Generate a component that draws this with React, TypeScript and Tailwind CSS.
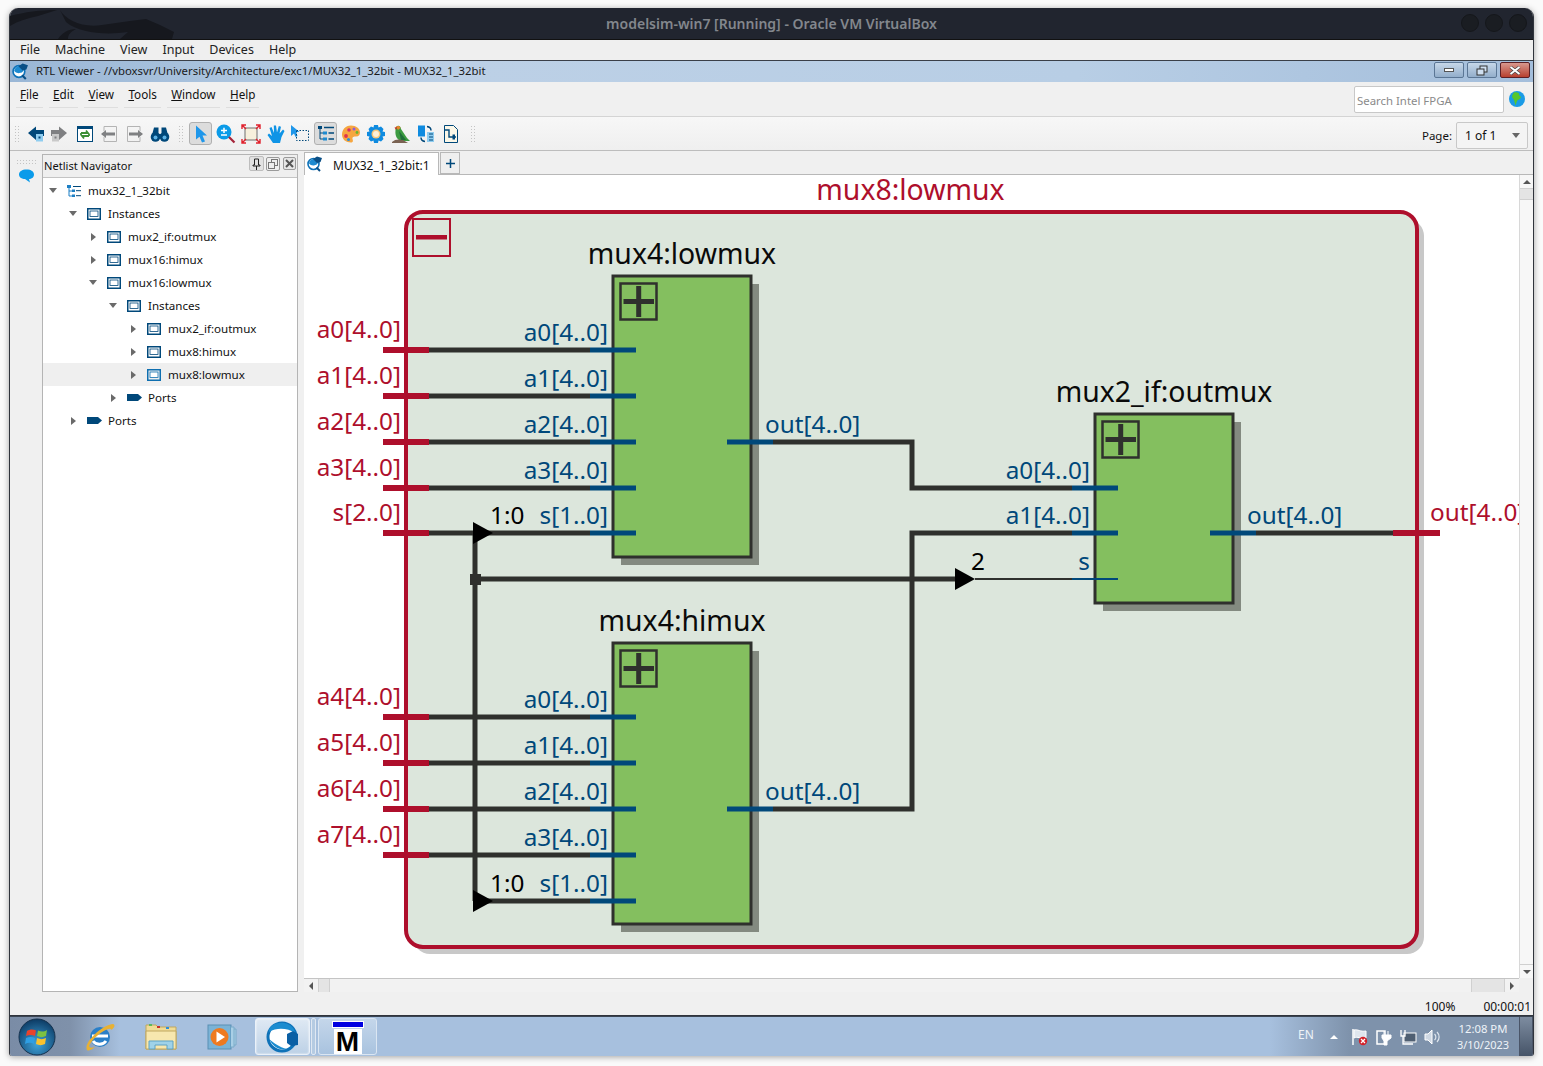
import React from "react";

const F = "font-['Noto_Sans',sans-serif]";

const RED = "#ae0f2c";
const BLUE = "#00487a";
const WIRE = "#2f302d";

function Grip({ className = "" }: { className?: string }) {
  return (
    <div className={"grid grid-cols-2 gap-x-[2px] gap-y-[2px] w-[3px] " + className}>
      {Array.from({ length: 12 }).map((_, i) => (
        <span key={i} className="w-[1px] h-[1px] bg-[#c4c4c4]" />
      ))}
    </div>
  );
}

function ChipIcon({ size = 16 }: { size?: number }) {
  return (
    <svg width={size} height={size} viewBox="0 0 16 16">
      <circle cx="6.5" cy="8" r="5.5" fill="#fff" stroke="#0f72b8" strokeWidth="1.6" />
      <path d="M2 7.5 A5 5 0 0 1 8 3 L11 7 A5 4 0 0 1 2 7.5Z" fill="#1d8ad0" />
      <path d="M6 3 L10 0.5 L15 2 L13.5 6 L10 7Z" fill="#0a4f86" />
      <path d="M9.5 11.5 L13 15" stroke="#0a4f86" strokeWidth="2" />
    </svg>
  );
}

const Ic = ({ children, w = 20, h = 20 }: { children: React.ReactNode; w?: number; h?: number }) => (
  <svg width={w} height={h} viewBox="0 0 20 20">{children}</svg>
);

const icons: Record<string, React.ReactNode> = {
  back: (
    <Ic>
      <path d="M1 9 L9 2.500 V6 H17 V12 H9 V16Z" fill="#00487a" />
      <rect x="9" y="10" width="7" height="7.500" fill="#8fcdf0" />
      <rect x="11.500" y="12.500" width="2" height="2" fill="#00487a" />
    </Ic>
  ),
  fwd: (
    <Ic>
      <path d="M19 9 L11 2.500 V6 H3 V12 H11 V16Z" fill="#7f8082" />
      <rect x="4" y="10" width="7" height="7.500" fill="#c9c9c9" />
      <rect x="6.500" y="12.500" width="2" height="2" fill="#7f8082" />
    </Ic>
  ),
  refresh: (
    <Ic>
      <rect x="2.500" y="2.500" width="15" height="15" fill="#fff" stroke="#00487a" />
      <rect x="2" y="2" width="16" height="3" fill="#00487a" />
      <path d="M6 9 H13 L11 6.500 M14 12 H7 L9 14.500 M6 9 V11 M14 10 V12" fill="none" stroke="#3c8f35" strokeWidth="1.800" />
    </Ic>
  ),
  prev: (
    <Ic>
      <path d="M4 7 V2.500 H16.500 V17.500 H4 V13" fill="none" stroke="#b4b4b4" />
      <path d="M1 10 L6 6 V8.500 H15 V11.500 H6 V14Z" fill="#7f8082" />
    </Ic>
  ),
  next: (
    <Ic>
      <path d="M16 7 V2.500 H3.500 V17.500 H16 V13" fill="none" stroke="#b4b4b4" />
      <path d="M19 10 L14 6 V8.500 H5 V11.500 H14 V14Z" fill="#7f8082" />
    </Ic>
  ),
  binoc: (
    <Ic>
      <circle cx="5.500" cy="13" r="4.800" fill="#00487a" />
      <circle cx="14.500" cy="13" r="4.800" fill="#00487a" />
      <path d="M2 11 L4 3.500 H8.500 V10 H11.500 V3.500 H16 L18 11Z" fill="#00487a" />
      <circle cx="5.500" cy="13.500" r="2" fill="#5eb3e6" />
      <circle cx="14.500" cy="13.500" r="2" fill="#5eb3e6" />
    </Ic>
  ),
  pointer: (
    <Ic>
      <path d="M5 1.500 L16 11.500 H11.500 L14 17.500 L11 18.500 L8.500 12.800 L5 15.500Z" fill="#1f97ea" />
    </Ic>
  ),
  zoom: (
    <Ic>
      <circle cx="8" cy="8" r="7.500" fill="#0b9be8" />
      <path d="M5 6.500 H11 M8 3.800 V9 M5 11 H11" stroke="#fff" strokeWidth="1.500" />
      <path d="M13 13 L18.500 18.500" stroke="#a5243a" strokeWidth="2.200" />
    </Ic>
  ),
  fit: (
    <Ic>
      <rect x="4" y="4" width="12" height="12" fill="#f7f0dc" stroke="#6f6f6f" />
      <path d="M1 5 V1 H5 M15 1 H19 V5 M19 15 V19 H15 M5 19 H1 V15 M1 1 L5 5 M19 1 L15 5 M19 19 L15 15 M1 19 L5 15" fill="none" stroke="#e0202c" strokeWidth="1.400" />
    </Ic>
  ),
  hand: (
    <Ic>
      <path d="M7 19 L1.500 11 L3 9.500 L6 12 L3.500 4 L5.500 3 L8 9 L7.800 1.500 H10 L11 8.500 L12.800 2 L15 2.800 L13.500 9.500 L17 5.500 L18.500 7 L15.500 13 L14 19Z" fill="#0f94e6" />
    </Ic>
  ),
  select: (
    <Ic>
      <path d="M1 1 L9.500 8 H6 L7.500 12 L5.500 13 L4 9.500 L1 12Z" fill="#1f97ea" />
      <rect x="6.500" y="6.500" width="12" height="10" fill="none" stroke="#00487a" strokeDasharray="1.500 1.500" />
    </Ic>
  ),
  hier: (
    <Ic>
      <path d="M4 3 V15 H8 M4 9 H8" fill="none" stroke="#00487a" />
      <rect x="2" y="2" width="4" height="3" fill="#00487a" />
      <rect x="7" y="7.500" width="4" height="3" fill="#1d8ad0" />
      <rect x="7" y="13.500" width="4" height="3" fill="#1d8ad0" />
      <path d="M8 3.500 H18 M12.500 9 H18 M12.500 15 H18" stroke="#00487a" strokeWidth="1.400" />
    </Ic>
  ),
  palette: (
    <Ic>
      <path d="M10 1.500 C4 1.500 1 6 1 10.500 C1 15.500 5 18.500 10 18.500 C12.500 18.500 12 16 11.500 15 C11 13 13 12.500 15 12.500 C18 12.500 19 10.500 19 8.500 C19 4.500 15 1.500 10 1.500Z" fill="#f6a640" />
      <circle cx="5" cy="12" r="1.900" fill="#e0334c" />
      <circle cx="7.500" cy="15.500" r="1.500" fill="#2b8fdc" />
      <circle cx="8" cy="6" r="1.800" fill="#d6306a" />
      <circle cx="13" cy="5" r="1.500" fill="#8f5ad6" />
      <circle cx="16" cy="8.500" r="1.400" fill="#68b532" />
    </Ic>
  ),
  gear: (
    <Ic>
      <path d="M8 1 H12 L12.500 3.500 L15 2.500 L17.500 5 L16.500 7.500 L19 8 V12 L16.500 12.500 L17.500 15 L15 17.500 L12.500 16.500 L12 19 H8 L7.500 16.500 L5 17.500 L2.500 15 L3.500 12.500 L1 12 V8 L3.500 7.500 L2.500 5 L5 2.500 L7.500 3.500Z" fill="#0f8be0" />
      <circle cx="10" cy="10" r="4.500" fill="#f5c77c" />
      <circle cx="10" cy="10" r="3" fill="#fbf0d8" />
    </Ic>
  ),
  bird: (
    <Ic>
      <path d="M5 3 C7 0.500 10 2 10 5 L16 14 L19 17 H11 C6 16 3 12 5 3Z" fill="#3c9b41" />
      <path d="M5 3 C6 1.500 9 1.500 9.500 4 L7 6Z" fill="#e9862c" />
      <path d="M3.500 3.500 L6 3 L5 6Z" fill="#c9332b" />
      <path d="M8 7 L15 16 H10Z" fill="#1f6f3a" />
      <path d="M1 18 C4 15 8 15 12 16 L17 19 H1Z" fill="#7a6252" />
    </Ic>
  ),
  swap: (
    <Ic>
      <rect x="2" y="1.500" width="7" height="11" fill="#0f8be0" />
      <rect x="11" y="8" width="7" height="10" fill="#8fcdf0" />
      <path d="M11 2.500 C14 3 15 5 15 6.500 M9 17.500 C6 17 5 15 5 13.500" fill="none" stroke="#00487a" strokeWidth="1.500" />
      <path d="M13 10 H17 M13 13 H17 M13 16 H17" stroke="#00487a" />
    </Ic>
  ),
  rtl: (
    <Ic>
      <path d="M3.500 1.500 H12.500 L16.500 5.500 V18.500 H3.500Z" fill="#fbf7e8" stroke="#00487a" />
      <path d="M3.500 6 H8 L8 13 H15" fill="none" stroke="#00487a" strokeWidth="1.400" />
      <rect x="11.500" y="10.500" width="2.500" height="5" fill="#00487a" />
    </Ic>
  ),
};

function ToolBtn({ name, active, ml = 0 }: { name: string; active?: boolean; ml?: number }) {
  return (
    <div
      className={
        "w-[23px] h-[23px] flex items-center justify-center rounded-[3px] shrink-0 " +
        (active ? "bg-[#dcdcdc] border border-[#b0b0b0]" : "")
      }
      style={{ marginLeft: ml }}
    >
      {icons[name]}
    </div>
  );
}

function InstIcon({ light }: { light?: boolean }) {
  return (
    <svg width="14" height="12" viewBox="0 0 14 12">
      <rect x="0.750" y="0.750" width="12.500" height="10.500" fill="none" stroke={light ? "#0f6fb0" : "#00487a"} strokeWidth="1.500" />
      <rect x="3" y="3" width="8" height="5.500" fill="#fff" stroke={light ? "#0f6fb0" : "#00487a"} strokeWidth="0.800" />
    </svg>
  );
}

function PortIcon() {
  return (
    <svg width="15" height="7" viewBox="0 0 15 7">
      <path d="M0 0 H11 L15 3.500 L11 7 H0Z" fill="#00487a" />
    </svg>
  );
}

function TopIcon() {
  return (
    <svg width="14" height="12" viewBox="0 0 14 12">
      <path d="M2 0 V11 H6 M2 6 H6" stroke="#1d7fc4" fill="none" />
      <rect x="0" y="0" width="4" height="3" fill="#1d7fc4" />
      <rect x="5" y="4.500" width="3" height="2.500" fill="#1d7fc4" />
      <rect x="5" y="9.500" width="3" height="2.500" fill="#1d7fc4" />
      <path d="M6 1.500 H14 M9 5.700 H14 M9 10.700 H14" stroke="#00487a" />
    </svg>
  );
}

type Row = { label: string; level: number; open?: boolean; leaf?: boolean; kind: "top" | "inst" | "port"; sel?: boolean };
const rows: Row[] = [
  { label: "mux32_1_32bit", level: 0, open: true, kind: "top" },
  { label: "Instances", level: 1, open: true, kind: "inst" },
  { label: "mux2_if:outmux", level: 2, kind: "inst" },
  { label: "mux16:himux", level: 2, kind: "inst" },
  { label: "mux16:lowmux", level: 2, open: true, kind: "inst" },
  { label: "Instances", level: 3, open: true, kind: "inst" },
  { label: "mux2_if:outmux", level: 4, kind: "inst" },
  { label: "mux8:himux", level: 4, kind: "inst" },
  { label: "mux8:lowmux", level: 4, kind: "inst", sel: true },
  { label: "Ports", level: 3, kind: "port" },
  { label: "Ports", level: 1, kind: "port" },
];

function TreeRow({ r }: { r: Row }) {
  return (
    <div
      className={"h-[23px] flex items-center " + (r.sel ? "bg-[#efefef]" : "")}
      style={{ paddingLeft: 5 + r.level * 20 }}
    >
      <span className="w-[10px] h-[10px] flex items-center justify-center shrink-0">
        {r.open ? (
          <span className="w-0 h-0 border-l-[4px] border-r-[4px] border-t-[5px] border-l-transparent border-r-transparent border-t-[#6a6a6a]" />
        ) : (
          <span className="w-0 h-0 border-t-[4px] border-b-[4px] border-l-[5px] border-t-transparent border-b-transparent border-l-[#6a6a6a]" />
        )}
      </span>
      <span className="w-[15px] ml-[9px] flex items-center shrink-0">
        {r.kind === "top" ? <TopIcon /> : r.kind === "port" ? <PortIcon /> : <InstIcon light={r.sel} />}
      </span>
      <span className="ml-[6px] text-[11.6px] text-[#111] leading-none">{r.label}</span>
    </div>
  );
}

function Block({ x, y, w, h }: { x: number; y: number; w: number; h: number }) {
  return (
    <g>
      <rect x={x + 8} y={y + 8} width={w} height={h} fill="#838a80" />
      <rect x={x} y={y} width={w} height={h} fill="#84bf5f" stroke={WIRE} strokeWidth="3" />
      <rect x={x + 7.500} y={y + 7.500} width="36" height="36" fill="none" stroke={WIRE} strokeWidth="2.500" />
      <path d={`M${x + 10.500} ${y + 25.500} H${x + 41} M${x + 25.700} ${y + 10} V${y + 41}`} stroke={WIRE} strokeWidth="5" />
    </g>
  );
}

const W = ({ d, w = 5, c = WIRE }: { d: string; w?: number; c?: string }) => (
  <path d={d} stroke={c} strokeWidth={w} fill="none" strokeLinejoin="miter" />
);

function PortL({ y, label }: { y: number; label: string }) {
  return (
    <g>
      <text x="401" y={y - 12} textAnchor="end" fontSize="24.3" fill={RED}>{label}</text>
      <rect x="383" y={y - 3} width="46" height="6" fill={RED} />
    </g>
  );
}

function Pin({ x, y, label, thin }: { x: number; y: number; label: string; thin?: boolean }) {
  return (
    <g>
      <text x={x + 18} y={y - 9} textAnchor="end" fontSize="24.3" fill={BLUE}>{label}</text>
      <rect x={x} y={thin ? y - 1 : y - 2.500} width="46" height={thin ? 2 : 5} fill={BLUE} />
    </g>
  );
}

function Mux4({ top, pinYs, name, labels, nameY }: { top: number; pinYs: number[]; name: string; labels: string[]; nameY: number }) {
  return (
    <g>
      <text x="682" y={nameY} textAnchor="middle" fontSize="28.4" fill="#0a0a0a">{name}</text>
      <Block x={613} y={top} w={138} h={281} />
      {pinYs.map((y, i) => (
        <Pin key={i} x={590} y={y} label={labels[i]} />
      ))}
      <text x="765" y={pinYs[2] - 9} fontSize="24.3" fill={BLUE}>out[4..0]</text>
      <rect x="727" y={pinYs[2] - 2.500} width="46" height="5" fill={BLUE} />
    </g>
  );
}

function Schematic() {
  const lo = [350, 396, 442, 488, 533];
  const hi = [717, 763, 809, 855, 901];
  const pins = ["a0[4..0]", "a1[4..0]", "a2[4..0]", "a3[4..0]", "s[1..0]"];
  return (
    <svg
      className="block w-[1215px] h-[803px]"
      viewBox="304 175 1215 803"
      style={{ fontFamily: "'Noto Sans', sans-serif" }}
    >
      <rect x="413" y="219" width="1011" height="735" rx="17" fill="#c8c8c8" />
      <rect x="406" y="212" width="1011" height="735" rx="17" fill="#dce6dc" stroke={RED} strokeWidth="4" />
      <text x="910.500" y="200" textAnchor="middle" fontSize="28.4" fill={RED}>mux8:lowmux</text>
      <rect x="413" y="219" width="37" height="37" fill="none" stroke={RED} strokeWidth="2" />
      <rect x="416" y="235" width="31" height="4.500" fill={RED} />

      {lo.map((y) => <W key={y} d={`M429 ${y} H590`} />)}
      {hi.map((y) => <W key={y} d={`M${y === 901 ? 475 : 429} ${y} H590`} />)}
      <W d="M773 442 H912 V488 H1072" />
      <W d="M773 809 H912 V533 H1072" />
      <W d="M475 533 V901" />
      <W d="M475 579 H960" />
      <W d="M975 579 H1072" w={2} />
      <W d="M1256 533 H1393" />
      <rect x="470" y="574" width="11" height="11" fill={WIRE} />
      <path d="M473 522 L493 533 L473 544Z" fill="#000" />
      <path d="M473 890 L493 901 L473 912Z" fill="#000" />
      <path d="M955 568 L975 579 L955 590Z" fill="#000" />

      <Mux4 top={276} pinYs={lo} name="mux4:lowmux" labels={pins} nameY={264} />
      <Mux4 top={643} pinYs={hi} name="mux4:himux" labels={pins} nameY={631} />

      <text x="1164" y="402" textAnchor="middle" fontSize="28.4" fill="#0a0a0a">mux2_if:outmux</text>
      <Block x={1095} y={414} w={138} h={189} />
      <Pin x={1072} y={488} label="a0[4..0]" />
      <Pin x={1072} y={533} label="a1[4..0]" />
      <Pin x={1072} y={579} label="s" thin />
      <text x="1247" y="524" fontSize="24.3" fill={BLUE}>out[4..0]</text>
      <rect x="1210" y="530.500" width="46" height="5" fill={BLUE} />
      <rect x="1393" y="530" width="47" height="6" fill={RED} />
      <text x="1430" y="521" fontSize="24.3" fill={RED}>out[4..0]</text>
      <text x="978" y="570" textAnchor="middle" fontSize="24.3" fill="#000">2</text>
      <text x="490" y="524" fontSize="24.3" fill="#000">1:0</text>
      <text x="490" y="892" fontSize="24.3" fill="#000">1:0</text>

      {["a0[4..0]", "a1[4..0]", "a2[4..0]", "a3[4..0]", "s[2..0]"].map((l, i) => (
        <PortL key={l} y={lo[i]} label={l} />
      ))}
      {["a4[4..0]", "a5[4..0]", "a6[4..0]", "a7[4..0]"].map((l, i) => (
        <PortL key={l} y={hi[i]} label={l} />
      ))}
    </svg>
  );
}

function Dragon() {
  return (
    <svg className="absolute left-0 top-0" width="180" height="31" viewBox="0 0 180 31">
      <path
        d="M0 8 C15 4 30 2 47 2 L28 8 C18 10 8 13 0 18Z M50 2 C56 12 72 20 92 17 L120 13 L136 11 L150 17 L164 24 L162 31 H110 L118 24 C98 27 70 26 56 14Z M48 31 C52 25 58 21 66 21 C60 24 58 27 58 31Z"
        fill="#16181e"
      />
    </svg>
  );
}

function TrayFlag() {
  return (
    <svg width="18" height="18" viewBox="0 0 18 18">
      <path d="M2 1 V17" stroke="#fff" strokeWidth="1.500" />
      <path d="M3 2 C7 1 9 4 15 3 V10 C9 11 7 8 3 10Z" fill="#dfe6ee" stroke="#fff" />
      <circle cx="12" cy="13" r="4.200" fill="#d3222a" />
      <path d="M10 11 L14 15 M14 11 L10 15" stroke="#fff" strokeWidth="1.300" />
    </svg>
  );
}

function Taskbar() {
  return (
    <div className="h-[40px] shrink-0 flex items-stretch relative border-t border-[#3a4452] bg-[linear-gradient(90deg,#7a8ca6_0px,#7f91aa_60px,#a7c0de_110px,#a7c0de_1260px,#7e92ab_1340px,#7e92ab_100%)]">
      <div className="w-[53px] flex items-center justify-center shrink-0">
        <svg width="38" height="38" viewBox="0 0 38 38">
          <defs>
            <radialGradient id="orb" cx="50%" cy="70%" r="70%">
              <stop offset="0" stopColor="#3ea4dc" />
              <stop offset="1" stopColor="#0c3a63" />
            </radialGradient>
          </defs>
          <circle cx="19" cy="19" r="18" fill="url(#orb)" stroke="#16324e" />
          <path d="M9 13 C12 11 15 11 18 12.500 L17 18 C14 16.500 11 16.500 8 18Z" fill="#e8432c" />
          <path d="M20 12.500 C23 14 26 14 29 12 L28 18 C25 19.500 22 19.500 19 18Z" fill="#7cc142" />
          <path d="M8 20 C11 18.500 14 18.500 17 20 L16 26 C13 24 10 24.500 7 26Z" fill="#2f9fe4" />
          <path d="M19 20 C22 21.500 25 21.500 28 20 L27 26 C24 27.500 21 27.500 18 26Z" fill="#fbc22d" />
        </svg>
      </div>
      <div className="w-[61px] ml-[6px] flex items-center justify-center shrink-0">
        <svg width="32" height="34" viewBox="0 0 32 34">
          <ellipse cx="16" cy="17" rx="10" ry="10" fill="#2a7fc8" />
          <path d="M8 16 H24 M22 21 A8 8 0 0 1 9 21" stroke="#fff" strokeWidth="3" fill="none" />
          <path d="M3 30 C-1 22 20 4 29 4 C32 5 30 8 27 10 C28 6 14 12 6 24 C4 27 6 29 11 27 C6 31 4 31 3 30Z" fill="#e8b134" />
        </svg>
      </div>
      <div className="w-[61px] flex items-center justify-center shrink-0">
        <svg width="32" height="30" viewBox="0 0 32 30">
          <path d="M1 3 H11 L13 5 H31 V27 H1Z" fill="#f0dc96" stroke="#c0a75e" />
          <rect x="4" y="2" width="3" height="2" fill="#5cb85c" />
          <rect x="12" y="4" width="3" height="2" fill="#c9332b" />
          <rect x="21" y="5" width="3" height="2" fill="#2f8fdc" />
          <path d="M1 9 H31 V27 H1Z" fill="#f7e7ae" stroke="#c0a75e" />
          <path d="M4 27 V19 H28 V27 H22 V23 H10 V27Z" fill="#9fd2e8" stroke="#5ea2c4" />
        </svg>
      </div>
      <div className="w-[61px] flex items-center justify-center shrink-0">
        <svg width="30" height="28" viewBox="0 0 30 28">
          <rect x="1" y="2" width="23" height="24" fill="#7ab3d6" stroke="#5a8fb4" />
          <path d="M24 4 H27 V24 H24 M27 6 H29 V22 H27" fill="#a9cfe6" stroke="#7aaac8" />
          <circle cx="12.500" cy="14" r="9" fill="#ee7a20" />
          <path d="M9.500 8.500 L18 14 L9.500 19.500Z" fill="#fff" />
        </svg>
      </div>
      <div className="w-[55px] ml-[3px] my-[1px] rounded-[3px] border border-[#eaf1f9] bg-[linear-gradient(180deg,#dfe9f4,#bdd1e6)] flex items-center justify-center shrink-0 shadow-[inset_0_0_2px_#fff]">
        <svg width="34" height="34" viewBox="0 0 34 34">
          <circle cx="16" cy="17" r="14" fill="#fff" stroke="#0f72b8" strokeWidth="3" />
          <path d="M3 12 C2 6 10 2 18 3 C25 4 29 9 29 13 C22 8 11 7 3 12Z" fill="#1b8cd0" />
          <path d="M3 19 C7 27 14 31 21 29 C13 27 8 23 3 19Z" fill="#1b8cd0" />
          <path d="M21 14 L27 11 L32 14 V25 L25 26 L21 23Z" fill="#0a5fa4" />
        </svg>
      </div>
      <div className="w-[5px] ml-[1px] my-[1px] rounded-[2px] border border-[#e0e8f2] bg-[#b5cbe2] shrink-0" />
      <div className="w-[59px] ml-[2px] my-[1px] rounded-[3px] border border-[#dbe6f2] bg-[linear-gradient(180deg,#c4d6ea,#a9c3df)] flex flex-col items-center shrink-0 overflow-hidden">
        <div className="w-[32px] h-[8px] mt-[2px] bg-white flex items-center justify-center">
          <div className="w-[30px] h-[5px] bg-[#0000e0]" />
        </div>
        <div className="mt-[1px] w-[28px] h-[25px] bg-white flex items-center justify-center">
          <span className="font-['Liberation_Sans',sans-serif] font-bold text-[28px] leading-[25px] text-black">M</span>
        </div>
      </div>
      <div className="flex-1" />
      <div className="flex items-center h-full text-white text-[12px]">
        <span className="w-[20px] text-[#eef3f8] -mt-[3px]">EN</span>
        <span className="ml-[12px] w-0 h-0 border-l-[4px] border-r-[4px] border-b-[4px] border-l-transparent border-r-transparent border-b-white" />
        <span className="ml-[13px] flex"><TrayFlag /></span>
        <span className="ml-[5px] flex">
          <svg width="18" height="18" viewBox="0 0 18 18">
            <path d="M3 3 H11 V16 H3Z" fill="none" stroke="#fff" strokeWidth="1.500" />
            <path d="M8 7 H17 V10 L13 13 V17 H10 V13 L8 10Z M10 3 V7 M14 3 V7" fill="#fff" stroke="#fff" />
          </svg>
        </span>
        <span className="ml-[7px] flex">
          <svg width="18" height="18" viewBox="0 0 18 18">
            <rect x="5" y="5" width="12" height="9" fill="#4f5f72" stroke="#fff" />
            <path d="M2 2 V8 H6 V2 M4 8 V16 H14" fill="none" stroke="#fff" strokeWidth="1.300" />
          </svg>
        </span>
        <span className="ml-[7px] flex">
          <svg width="17" height="18" viewBox="0 0 17 18">
            <path d="M1 6 H4 L8 2 V16 L4 12 H1Z" fill="#cfd8e3" stroke="#fff" />
            <path d="M10.500 6 A4 4 0 0 1 10.500 12 M13 4 A7 7 0 0 1 13 14" fill="none" stroke="#dfe6ee" strokeWidth="1.200" />
          </svg>
        </span>
        <div className="w-[64px] ml-[10px] text-[11.3px] leading-[16px] text-[#eef3f8] text-center">
          <div>12:08 PM</div>
          <div className="text-[11px]">3/10/2023</div>
        </div>
        <div className="w-[14px] h-full ml-[4px] border-x border-[#4a5568] bg-[linear-gradient(180deg,#7d8ca0,#465468)]" />
      </div>
    </div>
  );
}

function MenuItem({ k, rest }: { k: string; rest: string }) {
  return (
    <span className="px-[4px] pb-[5px] border-b border-[#dedede] leading-[16px]">
      <span className="underline">{k}</span>
      {rest}
    </span>
  );
}

export default function App() {
  return (
    <div className={"w-[1543px] h-[1066px] bg-[#fafafa] pt-[8px] pl-[9px] pr-[9px] pb-[10px] overflow-hidden " + F}>
      <div className="h-[1048px] flex flex-col rounded-t-[9px] rounded-b-[3px] overflow-hidden shadow-[0_1px_6px_rgba(0,0,0,0.35)] border-x border-[#30343c] bg-[#f0f0f0]">
        {/* host title bar */}
        <div className="h-[32px] shrink-0 bg-[#21252f] border-b border-[#111] relative flex items-center justify-center">
          <Dragon />
          <span className="relative text-[14px] font-semibold text-[#83878d]">modelsim-win7 [Running] - Oracle VM VirtualBox</span>
          <div className="absolute right-[6px] top-[6px] flex gap-[6px]">
            <span className="w-[18px] h-[18px] rounded-full bg-[#1a1d22] border border-[#15171b]" />
            <span className="w-[18px] h-[18px] rounded-full bg-[#1a1d22] border border-[#15171b]" />
            <span className="w-[18px] h-[18px] rounded-full bg-[#1a1d22] border border-[#15171b]" />
          </div>
        </div>
        {/* host menu */}
        <div className="h-[21px] shrink-0 bg-[#efefef] flex items-center pl-[10px] gap-[15px] text-[12.5px] text-[#222] border-b border-[#3a3f48]">
          <span>File</span>
          <span>Machine</span>
          <span>View</span>
          <span>Input</span>
          <span>Devices</span>
          <span>Help</span>
        </div>
        {/* guest title bar */}
        <div className="h-[21px] shrink-0 bg-[linear-gradient(90deg,#9ab7d6,#bcd0e6_30%,#b8cee5_70%,#a4bedb)] flex items-center relative">
          <span className="ml-[2px] flex"><ChipIcon size={17} /></span>
          <span className="ml-[7px] -mt-[2px] text-[11.35px] text-[#1a1a1a]">RTL Viewer - //vboxsvr/University/Architecture/exc1/MUX32_1_32bit - MUX32_1_32bit</span>
          <div className="absolute right-[3px] top-[1px] flex gap-[3px]">
            <span className="w-[30px] h-[16px] rounded-[2px] border border-[#5b7695] bg-[linear-gradient(180deg,#c6d7e9,#93aecb)] flex items-center justify-center">
              <span className="w-[10px] h-[4px] bg-white border border-[#555]" />
            </span>
            <span className="w-[30px] h-[16px] rounded-[2px] border border-[#5b7695] bg-[linear-gradient(180deg,#c6d7e9,#93aecb)] flex items-center justify-center">
              <svg width="12" height="11" viewBox="0 0 12 11">
                <rect x="4" y="1" width="7" height="6" fill="#cfdff0" stroke="#333" />
                <rect x="1" y="4" width="7" height="6" fill="#cfdff0" stroke="#333" />
              </svg>
            </span>
            <span className="w-[30px] h-[16px] rounded-[2px] border border-[#5c1f25] bg-[linear-gradient(180deg,#d8988e,#b8402f)] flex items-center justify-center">
              <svg width="12" height="9" viewBox="0 0 12 9">
                <path d="M1.500 1 L10.500 8 M10.500 1 L1.500 8" stroke="#444" strokeWidth="3.200" />
                <path d="M1.500 1 L10.500 8 M10.500 1 L1.500 8" stroke="#fff" strokeWidth="2" />
              </svg>
            </span>
          </div>
        </div>
        {/* guest menu */}
        <div className="h-[35px] shrink-0 bg-[#f0f0f0] border-b border-[#d4d4d4] flex items-start relative">
          <div className="flex pl-[6px] gap-[6.4px] pt-[4px] text-[11.7px] text-[#111]">
            <MenuItem k="F" rest="ile" />
            <MenuItem k="E" rest="dit" />
            <MenuItem k="V" rest="iew" />
            <MenuItem k="T" rest="ools" />
            <MenuItem k="W" rest="indow" />
            <MenuItem k="H" rest="elp" />
          </div>
          <div className="flex-1" />
          <div className="mt-[4px] w-[150px] h-[27px] bg-white border border-[#c8c8c8] rounded-[2px] text-[11.4px] text-[#8a8a8a] flex items-center pl-[2px] pt-[2px]">Search Intel FPGA</div>
          <svg className="mt-[9px] ml-[5px] mr-[8px]" width="16" height="16" viewBox="0 0 16 16">
            <circle cx="8" cy="8" r="8" fill="#1a9be6" />
            <path d="M5 1.500 C8 1 11 2 10 4 L12 6 C11 9 9 8 8 10 L6.500 14.500 L5 9 L3 6 C3 4 4 3 5 1.500Z" fill="#58c72c" />
          </svg>
        </div>
        {/* toolbar */}
        <div className="h-[34px] shrink-0 bg-[linear-gradient(180deg,#f7f7f7,#efefef)] border-b border-[#bdbdbd] flex items-center relative">
          <Grip className="ml-[5px]" />
          <ToolBtn name="back" ml={7} />
          <ToolBtn name="fwd" ml={-2} />
          <ToolBtn name="refresh" ml={4} />
          <ToolBtn name="prev" ml={2} />
          <ToolBtn name="next" ml={1} />
          <ToolBtn name="binoc" ml={3} />
          <Grip className="ml-[8px]" />
          <ToolBtn name="pointer" active ml={7} />
          <ToolBtn name="zoom" ml={2} />
          <ToolBtn name="fit" ml={2} />
          <ToolBtn name="hand" ml={2} />
          <ToolBtn name="select" ml={1} />
          <ToolBtn name="hier" active ml={3} />
          <ToolBtn name="palette" ml={2} />
          <ToolBtn name="gear" ml={2} />
          <ToolBtn name="bird" ml={2} />
          <ToolBtn name="swap" ml={2} />
          <ToolBtn name="rtl" ml={2} />
          <Grip className="ml-[9px]" />
          <div className="flex-1" />
          <span className="text-[11.5px] text-[#111] mr-[4px] mt-[5px]">Page:</span>
          <div className="w-[72px] h-[27px] mr-[5px] mt-[3px] rounded-[2px] border border-[#c8c8c8] bg-[#f4f4f4] flex items-center pl-[8px] pt-[1px] text-[12px] text-[#111] relative">
            1 of 1
            <span className="absolute right-[7px] top-[10px] w-0 h-0 border-l-[4px] border-r-[4px] border-t-[5px] border-l-transparent border-r-transparent border-t-[#666]" />
          </div>
        </div>
        {/* main area */}
        <div className="h-[841px] shrink-0 flex">
          <div className="w-[32px] shrink-0 flex flex-col items-center pt-[9px]">
            <div className="flex flex-col gap-[2px]">
              <div className="flex gap-[2px]">
                {Array.from({ length: 7 }).map((_, i) => <span key={i} className="w-[1px] h-[1px] bg-[#c4c4c4]" />)}
              </div>
              <div className="flex gap-[2px]">
                {Array.from({ length: 7 }).map((_, i) => <span key={i} className="w-[1px] h-[1px] bg-[#c4c4c4]" />)}
              </div>
            </div>
            <svg className="mt-[5px]" width="15" height="14" viewBox="0 0 15 14">
              <path d="M7.500 0.500 C12 0.500 15 2.500 15 5.500 C15 8.500 12.500 10 10 10 L11 13.500 L6 10 C3 10 0 8.500 0 5.500 C0 2.500 3 0.500 7.500 0.500Z" fill="#0a9bea" />
            </svg>
          </div>
          {/* navigator */}
          <div className="w-[256px] shrink-0 mt-[3px] border border-[#b4b4b4] bg-white flex flex-col">
            <div className="h-[23px] shrink-0 bg-[#efefef] border-b border-[#c4c4c4] flex items-center pl-[1px] text-[11.1px] text-[#111] relative">
              <span className="mt-[1px]">Netlist Navigator</span>
              <div className="absolute right-[1px] top-[1px] flex items-center gap-[2px]">
                <span className="w-[15px] h-[15px] rounded-[2px] border border-[#bdbdbd] bg-[#e2e2e2] flex items-center justify-center">
                  <svg width="9" height="12" viewBox="0 0 9 12"><path d="M2.500 1 H6.500 V7 H8 V8 H1 V7 H2.500Z M4.500 8 V12" fill="none" stroke="#222" /></svg>
                </span>
                <span className="w-[14px] h-[14px] flex items-center justify-center rounded-[2px] border border-[#9a9a9a]">
                  <svg width="10" height="10" viewBox="0 0 10 10"><rect x="3.500" y="0.500" width="6" height="6" fill="none" stroke="#777" /><rect x="0.500" y="3.500" width="6" height="6" fill="#eee" stroke="#777" /></svg>
                </span>
                <span className="w-[13px] h-[13px] ml-[1px] flex items-center justify-center rounded-[2px] border border-[#9a9a9a] bg-[#e6e6e6]">
                  <svg width="9" height="9" viewBox="0 0 9 9"><path d="M1 1 L8 8 M8 1 L1 8" stroke="#555" strokeWidth="2" /></svg>
                </span>
              </div>
            </div>
            <div className="pt-[1px]">
              {rows.map((r, i) => <TreeRow key={i} r={r} />)}
            </div>
          </div>
          {/* canvas column */}
          <div className="w-[6px] shrink-0" />
          <div className="flex-1 min-w-0 flex flex-col">
            <div className="h-[24px] shrink-0 flex items-end pl-[0px] border-b border-[#b8b8b8] pt-[2px]">
              <div className="w-[135px] h-[23px] -mb-[1px] bg-white border-x border-t border-[#b8b8b8] flex items-center pl-[2px] text-[12px] text-[#111]">
                <ChipIcon size={16} />
                <span className="ml-[10px] mt-[3px]">MUX32_1_32bit:1</span>
              </div>
              <div className="w-[20px] h-[22px] ml-[1px] border border-[#b8b8b8] bg-[#efefef] flex items-center justify-center">
                <svg width="11" height="11" viewBox="0 0 11 11"><path d="M5.500 1 V10 M1 5.500 H10" stroke="#00487a" strokeWidth="1.500" /></svg>
              </div>
            </div>
            <div className="flex-1 flex min-h-0">
              <div className="flex-1 min-w-0 flex flex-col">
                <div className="bg-white h-[803px] overflow-hidden">
                  <Schematic />
                </div>
                <div className="h-[14px] shrink-0 bg-[#f2f2f2] border-t border-[#c4c4c4] flex items-center">
                  <span className="w-[14px] flex justify-center">
                    <span className="w-0 h-0 border-t-[4px] border-b-[4px] border-r-[4px] border-t-transparent border-b-transparent border-r-[#555]" />
                  </span>
                  <span className="w-[12px] h-full bg-[#e4e4e4] border-x border-[#d0d0d0]" />
                  <span className="flex-1" />
                  <span className="w-[34px] h-full bg-[#e4e4e4] border-x border-[#d0d0d0]" />
                  <span className="w-[14px] flex justify-center">
                    <span className="w-0 h-0 border-t-[4px] border-b-[4px] border-l-[4px] border-t-transparent border-b-transparent border-l-[#555]" />
                  </span>
                </div>
              </div>
              <div className="w-[14px] shrink-0 bg-[#f7f7f7] border-l border-[#d8d8d8] flex flex-col items-center h-[803px]">
                <span className="h-[13px] flex items-center">
                  <span className="w-0 h-0 border-l-[4px] border-r-[4px] border-b-[4px] border-l-transparent border-r-transparent border-b-[#555]" />
                </span>
                <span className="w-full h-[12px] bg-[#e4e4e4] border-y border-[#d0d0d0]" />
                <span className="flex-1" />
                <span className="h-[14px] w-full border-t border-[#d0d0d0] flex items-center justify-center">
                  <span className="w-0 h-0 border-l-[4px] border-r-[4px] border-t-[4px] border-l-transparent border-r-transparent border-t-[#555]" />
                </span>
              </div>
            </div>
          </div>
        </div>
        {/* status bar */}
        <div className="flex-1 min-h-0 bg-[#f0f0f0] border-b border-[#30343c] flex items-end justify-end pr-[2px] pb-[1px] text-[12px] text-[#111] leading-[15px]">
          <span className="mr-[28px]">100%</span>
          <span>00:00:01</span>
        </div>
        <Taskbar />
      </div>
    </div>
  );
}
